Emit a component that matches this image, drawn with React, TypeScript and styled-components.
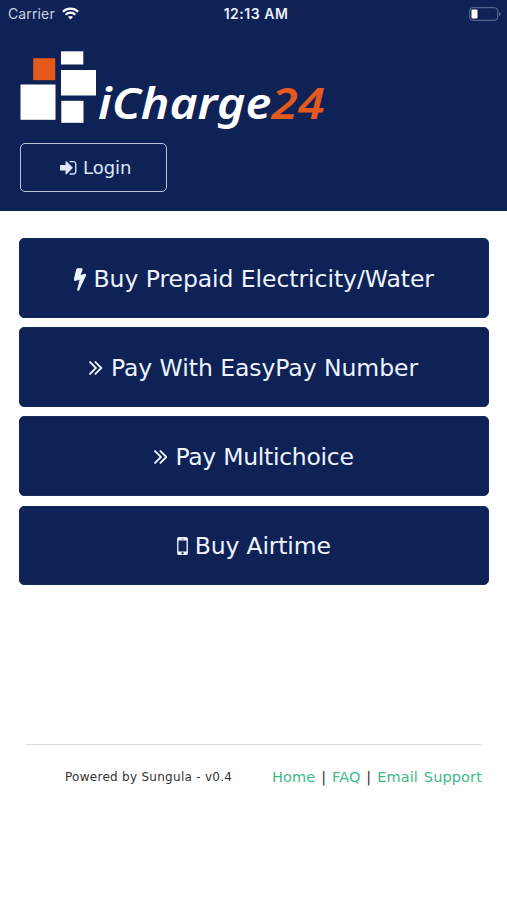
import React from "react";
import styled, { createGlobalStyle } from "styled-components";

const navy = "#0e2256";

const GlobalStyle = createGlobalStyle`
  *, *::before, *::after { box-sizing: border-box; }
  body {
    margin: 0;
    background: #fff;
    color: #333;
    font-family: Verdana, "DejaVu Sans", sans-serif;
  }
`;

const Screen = styled.div`
  min-height: 900px;
  display: flex;
  flex-direction: column;
  background: #fff;
`;

const Header = styled.header`
  height: 211px;
  background: ${navy};
  display: flex;
  flex-direction: column;
`;

const StatusBar = styled.div`
  height: 27px;
  padding: 0 6px 0 8px;
  display: grid;
  grid-template-columns: 1fr auto 1fr;
  align-items: center;
  color: #e9eef8;
  font: 14px/27px Inter, sans-serif;
`;

const Carrier = styled.div`
  display: flex;
  align-items: center;
  gap: 7px;
  color: #c9d1e2;
  letter-spacing: 0.13px;
`;

const Clock = styled.div`
  padding-left: 3px;
  font-weight: 600;
  font-size: 14px;
  letter-spacing: 0.52px;
`;

const Battery = styled.div`
  display: flex;
  justify-content: flex-end;
`;

const Brand = styled.div`
  display: flex;
  height: 84px;
  margin: 23px 0 0 20px;
`;

const Wordmark = styled.div`
  height: 60px;
  margin: 23px 0 0 1px;
  color: #fff;
  font: italic 600 43px/60px "Noto Sans", sans-serif;
  white-space: nowrap;
  transform: scaleX(1.122);
  transform-origin: left center;
`;

const Accent = styled.span`
  color: #e4591d;
`;

const LoginButton = styled.button`
  width: 147px;
  height: 49px;
  margin: 9px 0 0 20px;
  padding: 1px 0 0 5px;
  display: flex;
  align-items: center;
  justify-content: center;
  gap: 6px;
  border: 1.5px solid #b9c4da;
  border-radius: 5px;
  background: transparent;
  color: #dce6f7;
  font: 18px/24px Verdana, "DejaVu Sans", sans-serif;
`;

const Menu = styled.main`
  padding: 27px 18.5px 0 19px;
  display: flex;
  flex-direction: column;
  gap: 9.4px;
`;

const MenuButton = styled.button<{ $gap: number }>`
  height: 79.8px;
  padding: 2px 0 0;
  display: flex;
  align-items: center;
  justify-content: center;
  gap: ${(p) => p.$gap}px;
  border: 1px solid #14295f;
  border-radius: 5px;
  background: ${navy};
  color: #eef4ff;
  font: 23.5px/32px Verdana, "DejaVu Sans", sans-serif;
`;

const Label = styled.span<{ $spacing?: number }>`
  letter-spacing: ${(p) => p.$spacing ?? 0}px;
  white-space: nowrap;
`;

const Glyph = styled.svg`
  display: block;
  flex: none;
  fill: currentColor;
`;

const Footer = styled.footer`
  margin: 159px 25px 0 26px;
  padding-top: 20px;
  border-top: 1px solid #dedede;
  display: flex;
  justify-content: space-between;
  align-items: center;
  line-height: 22px;
  white-space: nowrap;
`;

const Version = styled.span`
  padding: 1px 0 0 39px;
  font-size: 12px;
  letter-spacing: 0.28px;
`;

const Links = styled.nav`
  font-size: 14.5px;
  letter-spacing: 0.12px;
  word-spacing: 1.1px;
`;

const Link = styled.a`
  color: #3dba87;
  text-decoration: none;
`;

const icons = {
  signIn: {
    box: "128 256 1536 1280",
    d: "M1312 896q0 26-19 45l-544 544q-19 19-45 19t-45-19-19-45v-288h-448q-26 0-45-19t-19-45v-384q0-26 19-45t45-19h448v-288q0-26 19-45t45-19 45 19l544 544q19 19 19 45zm352-352v704q0 119-84.5 203.5t-203.5 84.5h-320q-13 0-22.5-9.5t-9.5-22.5q0-4-1-20t-.5-26.5 3-23.5 10-19.5 20.5-6.5h320q66 0 113-47t47-113v-704q0-66-47-113t-113-47h-312l-11.5-1-11.5-3-8-5.5-7-9-2-13.5q0-4-1-20t-.5-26.5 3-23.5 10-19.5 20.5-6.5h320q119 0 203.5 84.5t84.5 203.5z",
  },
  bolt: {
    box: "448 0 896 1792",
    d: "M1333 566q18 20 7 44l-540 1157q-13 25-42 25-4 0-14-2-17-5-25.5-19t-4.5-30l197-808-406 101q-4 1-12 1-18 0-31-11-18-15-13-39l201-825q4-14 16-23t28-9h328q19 0 32 12.5t13 29.5q0 8-5 18l-171 463 396-98q8-2 12-2 19 0 34 15z",
  },
  chevrons: {
    box: "397 461 966 998",
    d: "M979 960q0 13-10 23l-466 466q-10 10-23 10t-23-10l-50-50q-10-10-10-23t10-23l393-393-393-393q-10-10-10-23t10-23l50-50q10-10 23-10t23 10l466 466q10 10 10 23zm384 0q0 13-10 23l-466 466q-10 10-23 10t-23-10l-50-50q-10-10-10-23t10-23l393-393-393-393q-10-10-10-23t10-23l50-50q10-10 23-10t23 10l466 466q10 10 10 23z",
  },
  mobile: {
    box: "512 256 768 1280",
    d: "M976 1408q0-33-23.5-56.5t-56.5-23.5-56.5 23.5-23.5 56.5 23.5 56.5 56.5 23.5 56.5-23.5 23.5-56.5zm208-160v-704q0-13-9.5-22.5t-22.5-9.5h-512q-13 0-22.5 9.5t-9.5 22.5v704q0 13 9.5 22.5t22.5 9.5h512q13 0 22.5-9.5t9.5-22.5zm-192-848q0-16-16-16h-160q-16 0-16 16t16 16h160q16 0 16-16zm288-16v1024q0 52-38 90t-90 38h-512q-52 0-90-38t-38-90v-1024q0-52 38-90t90-38h512q52 0 90 38t38 90z",
  },
};

function Icon({ name, width, height }: { name: keyof typeof icons; width: number; height: number }) {
  return (
    <Glyph
      viewBox={icons[name].box}
      width={width}
      height={height}
      stroke="currentColor"
      strokeWidth={name === "bolt" ? 70 : 0}
      aria-hidden
    >
      <path d={icons[name].d} />
    </Glyph>
  );
}

const items: { icon: keyof typeof icons; w: number; h: number; gap: number; spacing: number; label: string }[] = [
  { icon: "bolt", w: 12, h: 23.5, gap: 8, spacing: -0.06, label: "Buy Prepaid Electricity/Water" },
  { icon: "chevrons", w: 13.5, h: 14, gap: 8, spacing: -0.06, label: "Pay With EasyPay Number" },
  { icon: "chevrons", w: 13.5, h: 14, gap: 8, spacing: -0.28, label: "Pay Multichoice" },
  { icon: "mobile", w: 11, h: 18, gap: 7, spacing: -0.15, label: "Buy Airtime" },
];

export default function App() {
  return (
    <Screen>
      <GlobalStyle />
      <Header>
        <StatusBar>
          <Carrier>
            Carrier
            <svg width="17" height="13" viewBox="0 0 17 13" fill="none" stroke="#fff" strokeWidth="2.3">
              <path d="M.9 4.8a10.8 10.8 0 0 1 15.2 0" />
              <path d="M3.7 7.7a6.8 6.8 0 0 1 9.6 0" />
              <path d="M8.5 12.6 6 10.1a3.6 3.6 0 0 1 5 0Z" fill="#fff" stroke="none" />
            </svg>
          </Carrier>
          <Clock>12:13 AM</Clock>
          <Battery>
            <svg width="32" height="14" viewBox="0 0 32 14">
              <rect x=".7" y=".7" width="28" height="12.6" rx="3" fill="none" stroke="#66759a" />
              <rect x="2.5" y="2.5" width="6" height="9" rx="1" fill="#fff" />
              <path d="M30.2 5v4q1.5-.5 1.5-2t-1.5-2Z" fill="#66759a" />
            </svg>
          </Battery>
        </StatusBar>
        <Brand>
          <svg width="77" height="74" viewBox="0 0 77 74">
            <g fill="#fff">
              <rect x="41" y="1.3" width="22.3" height="13.2" />
              <rect x="41" y="20" width="35" height="25.5" />
              <rect x=".5" y="34.5" width="35" height="35.3" />
              <rect x="41.3" y="50.8" width="22.2" height="22" />
            </g>
            <rect x="13.2" y="8.2" width="22" height="22" fill="#e4591d" />
          </svg>
          <Wordmark>
            iCharge<Accent>24</Accent>
          </Wordmark>
        </Brand>
        <LoginButton>
          <Icon name="signIn" width={16.5} height={13.7} />
          <Label>Login</Label>
        </LoginButton>
      </Header>
      <Menu>
        {items.map((item) => (
          <MenuButton key={item.label} $gap={item.gap}>
            <Icon name={item.icon} width={item.w} height={item.h} />
            <Label $spacing={item.spacing}>{item.label}</Label>
          </MenuButton>
        ))}
      </Menu>
      <Footer>
        <Version>Powered by Sungula - v0.4</Version>
        <Links>
          <Link>Home</Link> | <Link>FAQ</Link> | <Link>Email Support</Link>
        </Links>
      </Footer>
    </Screen>
  );
}
